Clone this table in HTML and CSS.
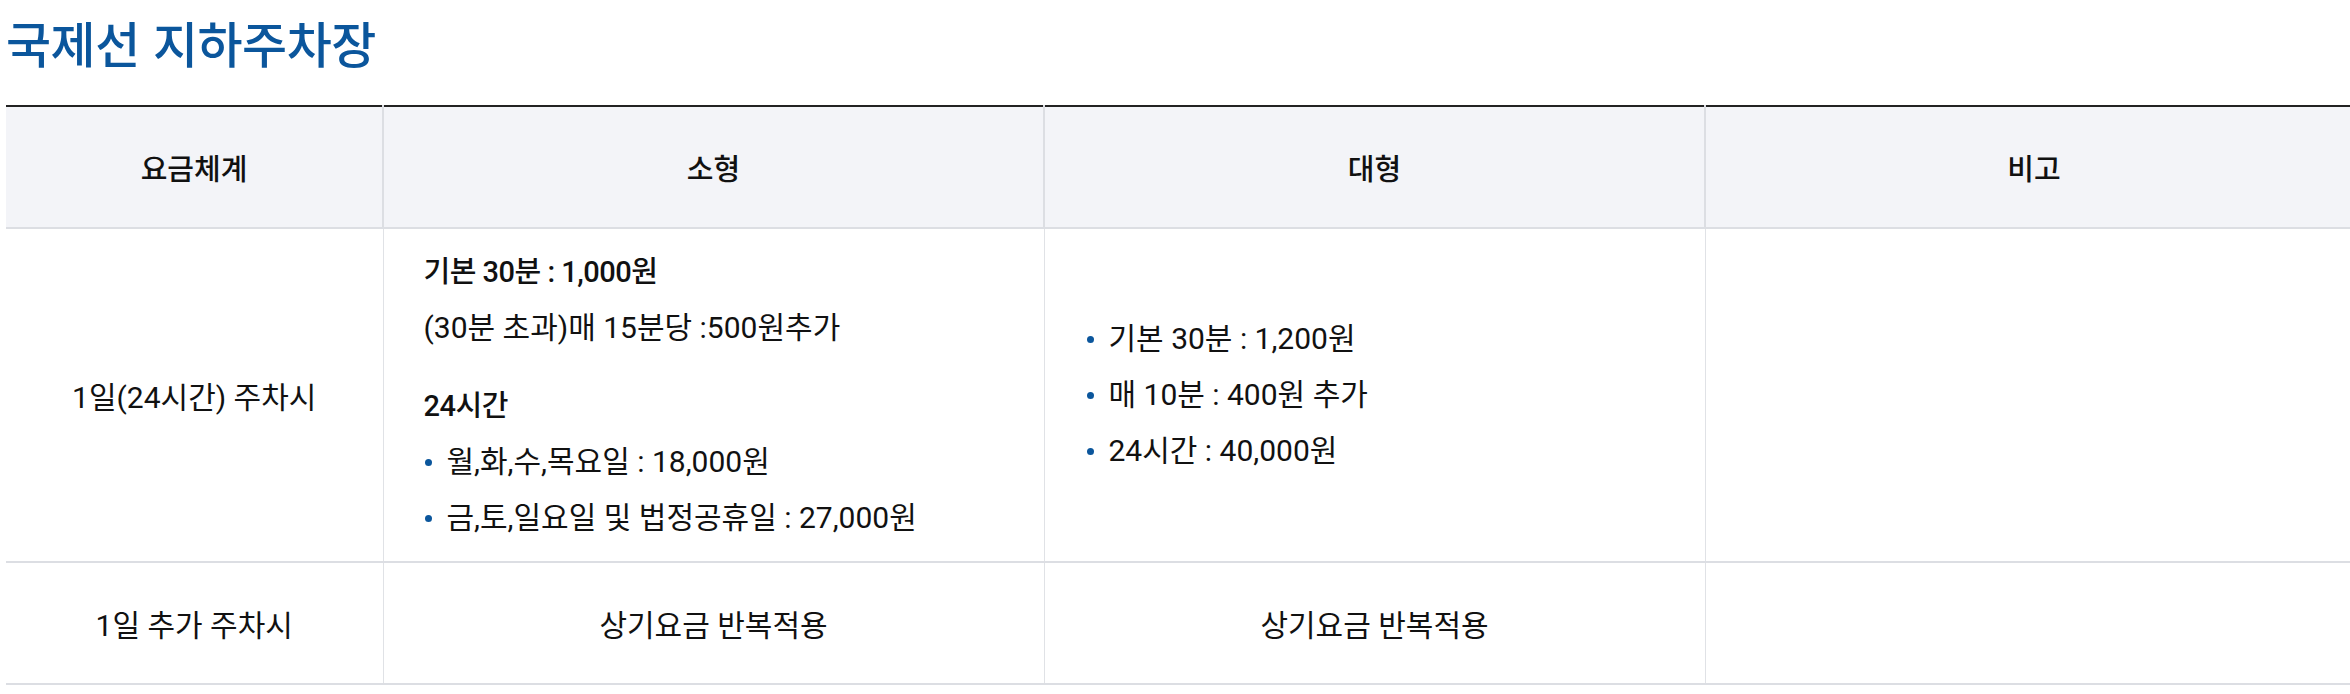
FILE: index.html
```html
<!DOCTYPE html>
<html lang="ko">
<head>
<meta charset="utf-8">
<title>국제선 지하주차장</title>
<link rel="stylesheet" href="styles.css">
</head>
<body>
<div class="page">
  <h2 class="title">국제선 지하주차장</h2>
  <table class="fee-table">
    <colgroup>
      <col class="c1"><col class="c2"><col class="c3"><col class="c4">
    </colgroup>
    <thead>
      <tr>
        <th>요금체계</th>
        <th>소형</th>
        <th>대형</th>
        <th>비고</th>
      </tr>
    </thead>
    <tbody>
      <tr class="row-main">
        <td class="center">1일(24시간) 주차시</td>
        <td class="left small-col">
          <p class="strong">기본 30분 : 1,000원</p>
          <p>(30분 초과)매 15분당 :500원추가</p>
          <p class="strong gap">24시간</p>
          <ul class="dots">
            <li>월,화,수,목요일 : 18,000원</li>
            <li>금,토,일요일 및 법정공휴일 : 27,000원</li>
          </ul>
        </td>
        <td class="left large-col">
          <ul class="dots">
            <li>기본 30분 : 1,200원</li>
            <li>매 10분 : 400원 추가</li>
            <li>24시간 : 40,000원</li>
          </ul>
        </td>
        <td></td>
      </tr>
      <tr class="row-sub">
        <td class="center">1일 추가 주차시</td>
        <td class="center">상기요금 반복적용</td>
        <td class="center">상기요금 반복적용</td>
        <td></td>
      </tr>
    </tbody>
  </table>
</div>
</body>
</html>
```

FILE: styles.css
```css
html, body {
  margin: 0;
  padding: 0;
  overflow: hidden;
  background: #ffffff;
}

body {
  font-family: Roboto, "Noto Sans CJK KR", sans-serif;
  color: #111111;
}

.page {
  padding: 0 0 0 6px;
}

.title {
  margin: 0;
  padding-top: 12px;
  height: 91px;
  box-sizing: border-box;
  font-family: "Noto Sans CJK KR", sans-serif;
  font-size: 49px;
  line-height: 60px;
  font-weight: 500;
  color: #0b569c;
  letter-spacing: -0.5px;
}

.fee-table {
  width: 2356px;
  table-layout: fixed;
  border-collapse: collapse;
  border-top: 2px solid #222222;
  margin-top: 14px;
}

.c1 { width: 377px; }
.c2 { width: 661px; }
.c3 { width: 661px; }
.c4 { width: 657px; }

.fee-table th {
  height: 120px;
  background: #f3f4f8;
  font-size: 29px;
  font-weight: 500;
  text-align: center;
  border-bottom: 2px solid #dcdee3;
  border-left: 2px solid #dcdee3;
  padding: 0;
}

.fee-table th:first-child,
.fee-table td:first-child {
  border-left: none;
}

.fee-table td {
  font-size: 30px;
  font-weight: 400;
  border-bottom: 2px solid #dcdee3;
  border-left: 1px solid #e0e2e6;
  vertical-align: middle;
  padding: 0;
}

.row-main td {
  height: 332px;
}

.row-sub td {
  height: 120px;
}

.center {
  text-align: center;
}

.small-col {
  padding: 0 40px !important;
}

.large-col {
  padding: 0 41px !important;
}

.left p {
  margin: 0 0 16px 0;
  line-height: 40px;
}

.left p.strong {
  font-size: 29px;
  font-weight: 500;
  letter-spacing: -0.5px;
}

.left p.gap {
  margin-top: 38px;
}

.dots {
  list-style: none;
  margin: 0;
  padding: 0;
}

.dots li {
  position: relative;
  line-height: 40px;
  padding-left: 23px;
  margin-bottom: 16px;
}

.dots li:last-child {
  margin-bottom: 0;
}

.dots li::before {
  content: "";
  position: absolute;
  left: 1px;
  top: 17px;
  width: 7px;
  height: 7px;
  border-radius: 50%;
  background: #0b569c;
}
```
